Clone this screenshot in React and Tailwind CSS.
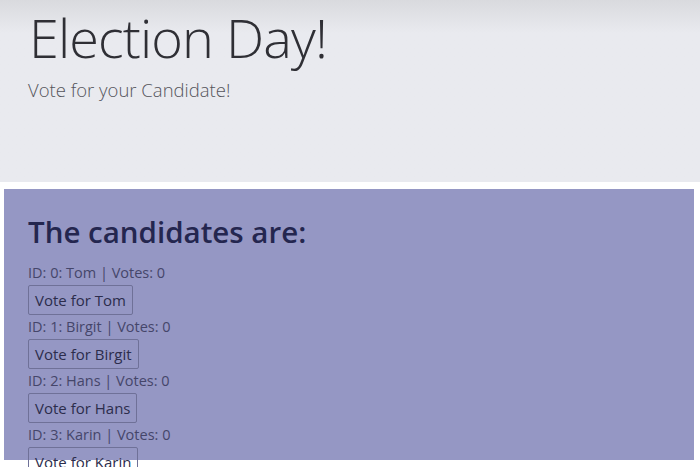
import React, { useState } from 'react';

const INITIAL = [
  { id: 0, name: 'Tom', votes: 0 },
  { id: 1, name: 'Birgit', votes: 0 },
  { id: 2, name: 'Hans', votes: 0 },
  { id: 3, name: 'Karin', votes: 0 },
];

export default function App() {
  const [candidates, setCandidates] = useState(INITIAL);

  const vote = (id) => {
    setCandidates(prev => prev.map(c => (c.id === id ? { ...c, votes: c.votes + 1 } : c)));
  };

  return (
    <div className="min-h-[467px] bg-white font-['Open_Sans','Noto_Sans',sans-serif]">
      <div className="h-[182px] bg-linear-to-b from-[#d9dade] to-[#e9eaef] to-[18%] pl-[29px] pt-[5px]">
        <h1 className="text-[54px] font-light leading-[1.2] text-[#2f2f35] tracking-[-0.9px]">Election Day!</h1>
        <p className="-ml-px mt-[6px] text-[18.5px] font-light leading-[1.5] text-[#55555c]">Vote for your Candidate!</p>
      </div>

      <div className="mt-[7px] ml-[4px] w-[690px] h-[271px] bg-[#9597c4] pl-[24px] pt-[25px]">
        <h2 className="text-[29.5px] font-semibold leading-[1.2] text-[#24264f] mb-[13px]">The candidates are:</h2>
        {candidates.map(c => (
          <div key={c.id}>
            <div className="text-[14.5px] leading-[22px] text-[#45466a]">
              ID: {c.id}: {c.name} | Votes: {c.votes}
            </div>
            <button
              onClick={() => vote(c.id)}
              className="my-px h-[30px] px-[6px] border border-[#6f7198] rounded-[2px] text-[15px] text-[#2c2d4c] bg-transparent"
            >
              Vote for {c.name}
            </button>
          </div>
        ))}
      </div>
    </div>
  );
}
